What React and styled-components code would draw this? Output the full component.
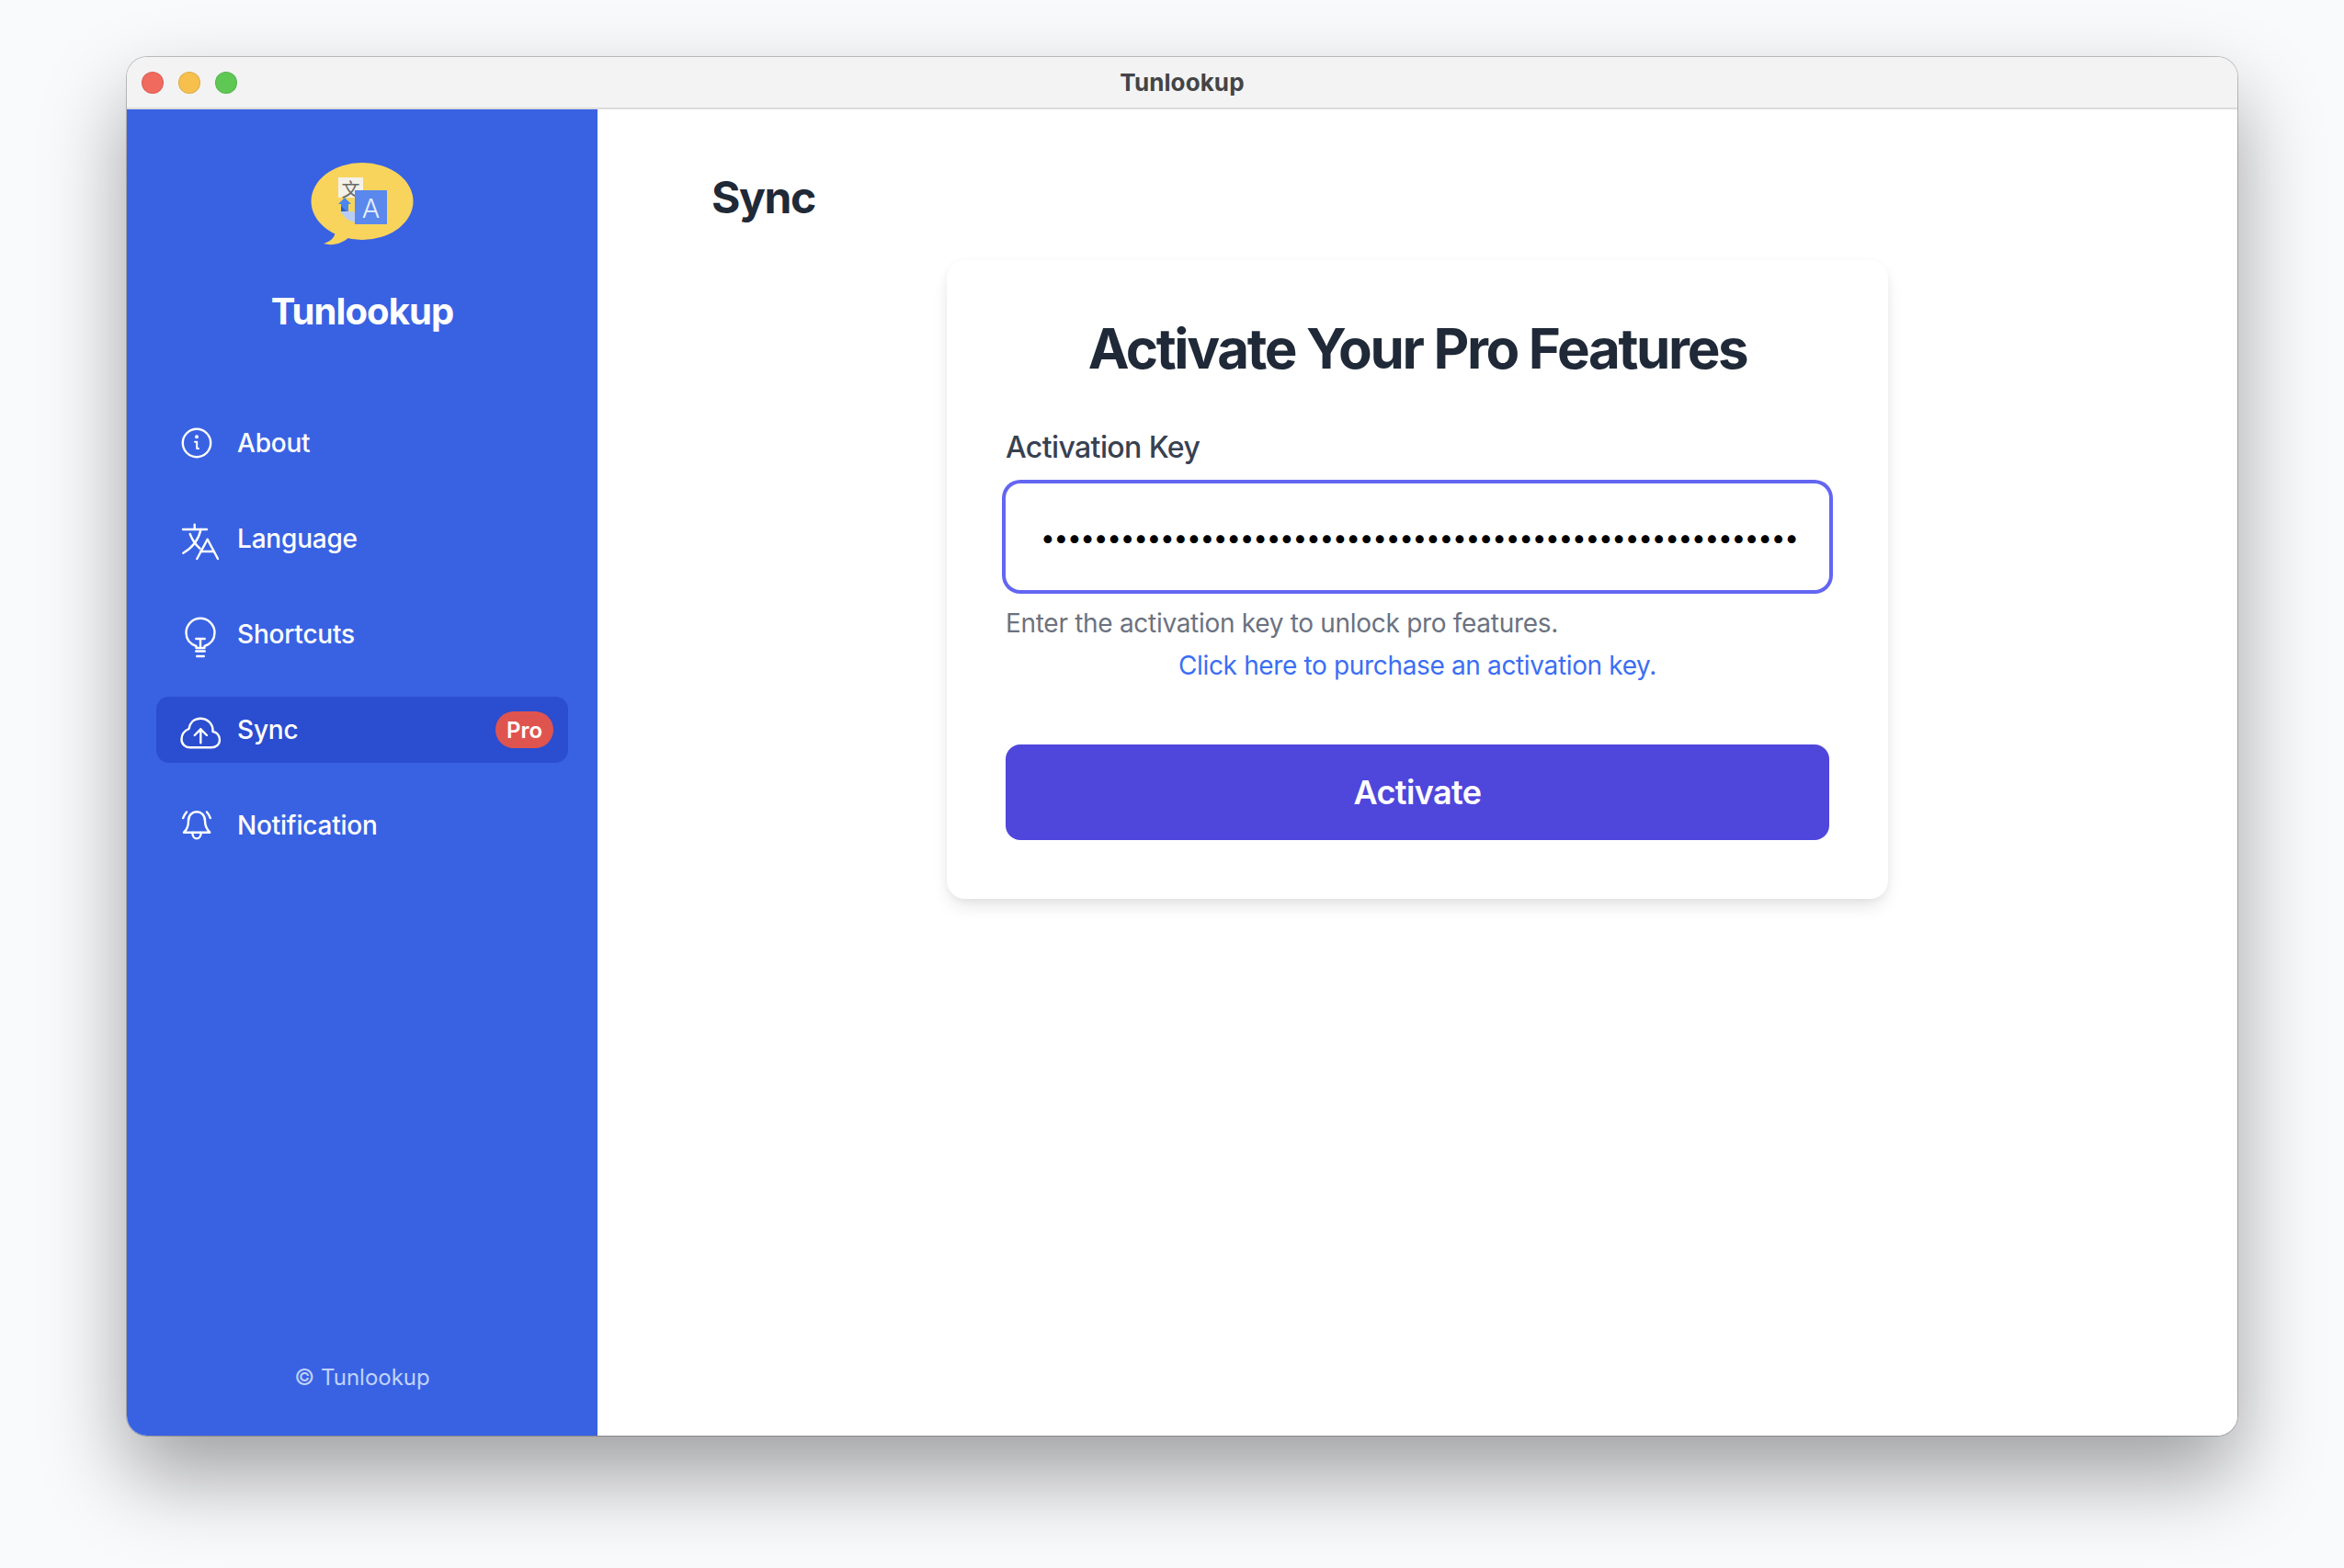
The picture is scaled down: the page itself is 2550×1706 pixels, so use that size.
import React from 'react';
import styled, { createGlobalStyle } from 'styled-components';

const GlobalStyle = createGlobalStyle`
  html, body {
    margin: 0;
    padding: 0;
    background: #f9fafc;
    font-family: Inter, "Liberation Sans", sans-serif;
  }
  * { box-sizing: border-box; }
`;

const Stage = styled.div`
  display: flex;
  width: 2550px;
  height: 1706px;
  padding: 62px 116px 144px 138px;
  overflow: hidden;
`;

const Window = styled.div`
  flex: 1;
  display: flex;
  flex-direction: column;
  border-radius: 22px;
  background: #fff;
  overflow: hidden;
  box-shadow: 0 0 0 1px rgba(0, 0, 0, 0.22), 0 44px 90px rgba(0, 0, 0, 0.36);
`;

const TitleBar = styled.div`
  position: relative;
  display: flex;
  align-items: center;
  justify-content: center;
  height: 57px;
  flex: none;
  padding-bottom: 1px;
  background: #f3f3f4;
  border-bottom: 2px solid #dcdcdd;
`;

const Lights = styled.div`
  position: absolute;
  left: 16px;
  top: 16px;
  display: flex;
  gap: 16px;
`;

const Light = styled.span`
  width: 24px;
  height: 24px;
  border-radius: 50%;
  background: ${(p) => p.$color};
  border: 1px solid rgba(0, 0, 0, 0.1);
`;

const WindowTitle = styled.div`
  font-size: 26px;
  font-weight: 700;
  letter-spacing: 0.1px;
  color: #444446;
`;

const Body = styled.div`
  flex: 1;
  display: flex;
  min-height: 0;
`;

const Sidebar = styled.aside`
  width: 512px;
  flex: none;
  display: flex;
  flex-direction: column;
  padding: 58px 32px 47px;
  background: #3962e3;
`;

const Logo = styled.svg`
  display: block;
  width: 112px;
  height: 90px;
  margin: 0 auto;
`;

const Brand = styled.div`
  margin-top: 48px;
  text-align: center;
  font-size: 40px;
  line-height: 48px;
  font-weight: 700;
  letter-spacing: -0.9px;
  color: #fff;
`;

const Nav = styled.nav`
  display: flex;
  flex-direction: column;
  gap: 32px;
  margin-top: 83px;
`;

const NavItem = styled.div`
  display: flex;
  align-items: center;
  height: 72px;
  padding: 0 16px 0 27px;
  border-radius: 14px;
  font-size: 28px;
  font-weight: 500;
  letter-spacing: -0.2px;
  color: #fff;
  background: ${(p) => (p.$active ? '#2b4dcf' : 'transparent')};
`;

const NavIcon = styled.svg`
  flex: none;
  width: 44px;
  height: 44px;
  margin-right: 17px;
  overflow: visible;
  fill: none;
  stroke: #fff;
  stroke-width: 2.4;
  stroke-linecap: round;
  stroke-linejoin: round;
`;

const ProBadge = styled.span`
  display: flex;
  align-items: center;
  justify-content: center;
  width: 63px;
  height: 40px;
  margin-left: auto;
  border-radius: 20px;
  background: #e0544f;
  font-size: 24px;
  font-weight: 600;
  letter-spacing: 0;
  color: #fff;
`;

const Copyright = styled.div`
  margin-top: auto;
  text-align: center;
  font-size: 24px;
  line-height: 32px;
  color: #c0d3fb;
`;

const Main = styled.main`
  flex: 1;
  min-width: 0;
  padding-top: 68px;
  background: #fff;
`;

const PageTitle = styled.h1`
  margin: 0 0 40px 124px;
  font-size: 48px;
  line-height: 56px;
  font-weight: 700;
  letter-spacing: -1.4px;
  color: #1f2937;
`;

const Card = styled.section`
  width: 1024px;
  margin: 0 auto;
  padding: 64px;
  border-radius: 20px;
  background: #fff;
  box-shadow: 0 10px 20px -4px rgba(0, 0, 0, 0.12), 0 2px 8px rgba(0, 0, 0, 0.04);
`;

const CardTitle = styled.h2`
  margin: 0 0 56px;
  text-align: center;
  font-size: 60px;
  line-height: 64px;
  font-weight: 700;
  letter-spacing: -2.35px;
  color: #1f2937;
`;

const Label = styled.label`
  display: block;
  font-size: 32px;
  line-height: 40px;
  font-weight: 500;
  letter-spacing: -0.6px;
  color: #374151;
`;

const KeyInput = styled.input`
  display: block;
  width: 100%;
  height: 116px;
  margin-top: 19px;
  padding: 2px 24px 0 38px;
  border: none;
  border-radius: 16px;
  outline: none;
  box-shadow: 0 0 0 4px #6366f1;
  background: #fff;
  font-family: Inter, sans-serif;
  font-size: 28px;
  letter-spacing: -1.3px;
  color: #000;
`;

const Helper = styled.p`
  margin: 18px 0 0;
  font-size: 28px;
  line-height: 36px;
  letter-spacing: -0.3px;
  color: #6b7280;
`;

const PurchaseLink = styled.a`
  display: block;
  margin-top: 10px;
  text-align: center;
  font-size: 28px;
  line-height: 36px;
  letter-spacing: -0.35px;
  color: #3b6ef5;
  text-decoration: none;
`;

const ActivateButton = styled.button`
  display: block;
  width: 100%;
  height: 104px;
  margin-top: 68px;
  border: none;
  border-radius: 16px;
  background: #4f46dc;
  font-family: Inter, sans-serif;
  font-size: 36px;
  font-weight: 600;
  letter-spacing: -0.6px;
  color: #fff;
`;

const AppLogo = () => (
  <Logo viewBox="18 17 112 90">
    <ellipse cx="74" cy="59" rx="55.5" ry="42" fill="#f9d45c" />
    <path d="M45 92 C44 99 39 103 32 105 C42 108 52 105 60 98 Z" fill="#f9d45c" />
    <rect x="48" y="33" width="27" height="22" fill="#f3f1e8" />
    <text x="61.5" y="54" textAnchor="middle" fontFamily="Noto Sans CJK SC, sans-serif" fontSize="20" fill="#6a6a66">文</text>
    <path d="M55 55 L62 62 H59 V70 H51 V62 H48 Z" fill="#4a86f0" />
    <path d="M51 70 V64 L57 70 Z" fill="#2f5fb8" />
    <path d="M50 70 H64 L72 75 L66 82 L58 79 Z" fill="#b9ccf3" />
    <rect x="66" y="47" width="35" height="37" fill="#5a88ec" />
    <text x="83.5" y="76.5" textAnchor="middle" fontFamily="Inter, sans-serif" fontWeight="300" fontSize="29" fill="#e8eefc">A</text>
  </Logo>
);

const InfoIcon = () => (
  <NavIcon viewBox="0 0 44 44">
    <circle cx="17" cy="22" r="15.2" />
    <path d="M15 20.8 H17.2 V28 H19" strokeWidth="2" />
    <circle cx="17" cy="15.2" r="0.8" />
  </NavIcon>
);

const LanguageIcon = () => (
  <NavIcon viewBox="0 0 44 44">
    <path d="M2 12 H28" />
    <path d="M14.7 6.7 V12" />
    <path d="M21.5 12 C19 24 12 32 2.3 37.7" />
    <path d="M9.7 17 C12 23 16 29 20.5 32.7" />
    <path d="M17.3 44 L28.7 22.7 L40 44" />
    <path d="M21 36 H36" />
  </NavIcon>
);

const BulbIcon = () => (
  <NavIcon viewBox="0 0 44 44">
    <path d="M16.5 37 V35 C9.5 32.5 5.5 27 5.5 20.3 A15.5 15.5 0 0 1 36.5 20.3 C36.5 27 32.5 32.5 25.5 35 V37 Z" />
    <path d="M16.3 27 H25.7 M21 27 V37" />
    <path d="M16.3 40.5 H25.7 M17.3 46 H24.7" strokeWidth="2.6" />
  </NavIcon>
);

const CloudIcon = () => (
  <NavIcon viewBox="0 0 44 44">
    <path d="M10 41.3 H33 C38.5 41.3 42 37.5 42 33 C42 28 38.5 24.5 34.5 24 C35 15 28 9.7 21 9.7 C14 9.7 9.5 14.5 8.5 21 C3.5 23 0.5 27.5 0.5 32.5 C0.5 37.5 4.5 41.3 10 41.3 Z" />
    <path d="M21.3 36.3 V21.3 M14.7 28 L21.3 21.3 L28 28" />
  </NavIcon>
);

const BellIcon = () => (
  <NavIcon viewBox="0 0 44 44">
    <path d="M3 29.7 C7 26 8 22 8 17 C8 11 12 7.3 17 7.3 C22 7.3 26 11 26 17 C26 22 27.5 26 31.3 29.7 Z" />
    <path d="M12.3 30 C12.5 38.5 21.5 38.5 21.7 30" />
    <path d="M6 7.5 C4.3 9.5 3 11.5 2.2 14 M28 7.5 C29.7 9.5 31 11.5 31.8 14" />
  </NavIcon>
);

const navItems = [
  { label: 'About', icon: <InfoIcon /> },
  { label: 'Language', icon: <LanguageIcon /> },
  { label: 'Shortcuts', icon: <BulbIcon /> },
  { label: 'Sync', icon: <CloudIcon />, active: true, pro: true },
  { label: 'Notification', icon: <BellIcon /> },
];

export default function App() {
  return (
    <Stage>
      <GlobalStyle />
      <Window>
        <TitleBar>
          <Lights>
            <Light $color="#f16a5e" />
            <Light $color="#f7c04d" />
            <Light $color="#5fc854" />
          </Lights>
          <WindowTitle>Tunlookup</WindowTitle>
        </TitleBar>
        <Body>
          <Sidebar>
            <AppLogo />
            <Brand>Tunlookup</Brand>
            <Nav>
              {navItems.map((item) => (
                <NavItem key={item.label} $active={item.active}>
                  {item.icon}
                  {item.label}
                  {item.pro && <ProBadge>Pro</ProBadge>}
                </NavItem>
              ))}
            </Nav>
            <Copyright>© Tunlookup</Copyright>
          </Sidebar>
          <Main>
            <PageTitle>Sync</PageTitle>
            <Card>
              <CardTitle>Activate Your Pro Features</CardTitle>
              <Label htmlFor="key">Activation Key</Label>
              <KeyInput id="key" type="password" readOnly value={'x'.repeat(57)} />
              <Helper>Enter the activation key to unlock pro features.</Helper>
              <PurchaseLink href="#">Click here to purchase an activation key.</PurchaseLink>
              <ActivateButton>Activate</ActivateButton>
            </Card>
          </Main>
        </Body>
      </Window>
    </Stage>
  );
}
